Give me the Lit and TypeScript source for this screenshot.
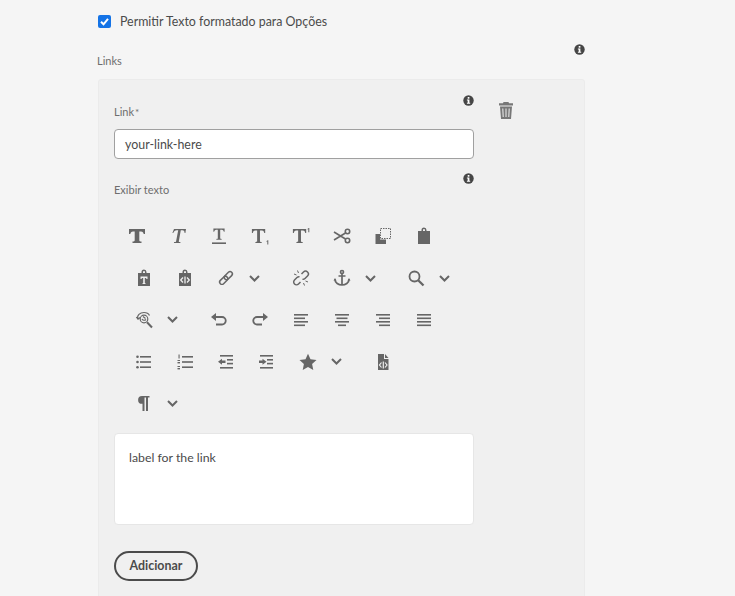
import { LitElement, html, css, svg } from 'lit';
import { customElement } from 'lit/decorators.js';

const T_THIN = 'M2 2h14v4h-1c-.2-1.300-.7-2.600-2.500-2.600h-2v10.800c0 .6.500.8 1.800.8V16H5.700v-1c1.300 0 1.800-.2 1.800-.8V3.400h-2C3.700 3.400 3.200 4.700 3 6H2z';
const T_BOLD = 'M1 2h16v5h-1.300c-.3-1.600-1-2.600-2.700-2.600h-1.700v8.900c0 .9.600 1.200 2.200 1.200V16H4.500v-1.500c1.600 0 2.200-.3 2.200-1.200V4.400H5C3.300 4.400 2.600 5.400 2.300 7H1z';

const lines = (rows: number[][]) =>
  rows.map(([x, y, w]) => svg`<rect x=${x} y=${y} width=${w} height="1.600"></rect>`);

const clip = (inner: unknown) => svg`
  <path d="M3 4h3.500V3a2.500 2.500 0 0 1 5 0v1H15v13H3zM8 4h2V3a1 1 0 0 0-2 0z" fill-rule="evenodd"></path>${inner}`;

const ICONS: Record<string, unknown> = {
  bold: svg`<path d=${T_BOLD}></path>`,
  italic: svg`<path d="M5 2h12l-.6 4h-.8c0-1.700-.5-2.800-2.300-2.800h-1.500L9.800 14.200c-.1.600.4.900 1.700.9l-.2.900H4.900l.2-.9c1.300 0 1.800-.3 2-.9L9.200 3.200H7.700C5.900 3.200 5 4.300 4.200 6h-.8z"></path>`,
  underline: svg`<g transform="translate(1.800 0) scale(.8)"><path d=${T_THIN}></path></g><rect x="2" y="15.400" width="14" height="1.600"></rect>`,
  sub: svg`<g transform="translate(-1 0) scale(.95 1)"><path d=${T_THIN}></path></g><path d="M15.600 14l1.200-.8h.5V17.500h-1v-3l-.7.400z"></path>`,
  sup: svg`<g transform="translate(-1 0) scale(.95 1)"><path d=${T_THIN}></path></g><path d="M15.600 1.800l1.200-.8h.5V5.300h-1v-3l-.7.400z"></path>`,
  cut: svg`<g fill="none" stroke-width="1.600"><circle cx="14.500" cy="4.500" r="2.200"></circle><circle cx="14.500" cy="13.500" r="2.200"></circle><path d="M1 5l11.500 7M1 13l11.500-7"></path></g>`,
  copy: svg`<path d="M1.500 7H6v5.500h6V17H1.500z"></path><rect x="6.500" y="1.500" width="10" height="10" fill="none" stroke-width="1" stroke-dasharray="1.500 1"></rect>`,
  paste: clip(''),
  pasteText: clip(svg`<path fill="#f0f0f0" d="M5.500 7.500h7V10h-1c-.2-.8-.5-1-1.200-1H9.800v4.800c0 .3.2.4.700.4v.8h-3v-.8c.5 0 .7-.1.7-.4V9H7.700c-.7 0-1 .2-1.200 1h-1z"></path>`),
  pasteHtml: clip(svg`<g fill="none" stroke="#f0f0f0" stroke-width="1.300"><path d="M7 8.500L4.700 11 7 13.500M11 8.500l2.300 2.500-2.300 2.500M9 7.500v7"></path></g>`),
  link: svg`<g transform="rotate(-45 9 9)" fill="none" stroke-width="1.500"><rect x="1" y="6.700" width="9.500" height="4.600" rx="2.300"></rect><rect x="7.500" y="6.700" width="9.500" height="4.600" rx="2.300"></rect></g>`,
  unlink: svg`<g fill="none" stroke-width="1.500"><path d="M9.500 5l2-2a2.800 2.800 0 0 1 4 4l-2.500 2.500a2.800 2.800 0 0 1-2.500.8M8.500 13l-2 2a2.800 2.800 0 0 1-4-4L5 8.500a2.800 2.800 0 0 1 2.500-.8"></path></g><g fill="none" stroke-width="1"><path d="M5.500 1.500l1 2.500M2 5l2.500 1M12.500 16.500l-1-2.500M16 13l-2.500-1"></path></g>`,
  anchor: svg`<g fill="none" stroke-width="1.700"><circle cx="9" cy="3" r="1.500"></circle><path d="M9 4.500V16M5.500 7h7M2 10.500c0 3.500 3.500 5.500 7 5.500s7-2 7-5.500"></path></g><path d="M.5 11.500L2 9l1.500 2.500zM14.500 11.500L16 9l1.500 2.500z"></path>`,
  search: svg`<g fill="none"><circle cx="7.500" cy="7.500" r="5" stroke-width="1.800"></circle><path d="M11.200 11.200l5.300 5.300" stroke-width="2.300"></path></g>`,
  replace: svg`<g fill="none" stroke-width="1.200"><circle cx="9" cy="8" r="3.800"></circle><path d="M12 11.200l5 5.300" stroke-width="2"></path><path d="M3 8C1.500 4.500 5 1.500 9 1.500c2.500 0 4.500 1 5.500 3M1.300 6L3 8.200 5.200 6.500M7 8c.5 1.300 2.500 1.800 4 .5M8 5.500l2.500 2"></path></g>`,
  undo: svg`<g fill="none" stroke-width="1.800"><path d="M5 6h7a3.700 3.700 0 0 1 0 7.500H6"></path></g><path d="M6 2v8L1 6z"></path>`,
  redo: svg`<g fill="none" stroke-width="1.800"><path d="M13 6H6a3.700 3.700 0 0 0 0 7.500h5"></path></g><path d="M12 2v8l5-4z"></path>`,
  alignLeft: lines([[2, 3, 14], [2, 6.500, 11], [2, 10, 14], [2, 13.500, 11]]),
  alignCenter: lines([[2, 3, 14], [3.500, 6.500, 11], [2, 10, 14], [5, 13.500, 8]]),
  alignRight: lines([[2, 3, 14], [5, 6.500, 11], [2, 10, 14], [5, 13.500, 11]]),
  justify: lines([[2, 3, 14], [2, 6.500, 14], [2, 10, 14], [2, 13.500, 14]]),
  ul: svg`${lines([[5, 3, 11], [5, 8.200, 11], [5, 13.400, 11]])}<circle cx="2.500" cy="3.800" r="1.300"></circle><circle cx="2.500" cy="9" r="1.300"></circle><circle cx="2.500" cy="14.200" r="1.300"></circle>`,
  ol: svg`${lines([[6, 3, 11], [6, 8.200, 11], [6, 13.400, 11]])}<rect x="2.500" y="1.500" width="1.100" height="4"></rect><rect x="1.500" y="7" width="2.500" height="1"></rect><rect x="1.500" y="9" width="2.500" height="1.400"></rect><rect x="1.500" y="13" width="2.500" height="1"></rect><rect x="1.500" y="15" width="2.500" height="1.400"></rect>`,
  outdent: svg`${lines([[3, 2, 13], [10, 6, 6], [10, 9.800, 6], [3, 14, 13]])}<path d="M1 8.800L5 5.800v1.800h3.500v2.400H5v1.800z"></path>`,
  indent: svg`${lines([[2, 2, 13], [9, 6, 6], [9, 9.800, 6], [2, 14, 13]])}<path d="M8.500 8.800L4.500 5.800v1.800H1v2.400h3.500v1.800z"></path>`,
  star: svg`<path d="M9 .8l2.500 5.500 6 .7-4.400 4 1.200 6L9 14l-5.300 3 1.200-6L.5 7l6-.7z"></path>`,
  fileCode: svg`<path d="M4 1h6v5h4.500v11H4zM11 1l3.500 4H11z"></path><g fill="none" stroke="#f0f0f0" stroke-width="1.200"><path d="M7.500 9.500L5.500 12l2 2.500M11 9.500l2 2.500-2 2.500M9.300 8.500v7"></path></g>`,
  pilcrow: svg`<path d="M7 2H14.500v1.600H13V17h-2V3.600H9.500V17h-2v-7.200H7a3.900 3.900 0 0 1 0-7.800z"></path>`,
};

const ROWS: Array<Array<[string, boolean?]>> = [
  [['bold'], ['italic'], ['underline'], ['sub'], ['sup'], ['cut'], ['copy'], ['paste']],
  [['pasteText'], ['pasteHtml'], ['link', true], ['unlink'], ['anchor', true], ['search', true]],
  [['replace', true], ['undo'], ['redo'], ['alignLeft'], ['alignCenter'], ['alignRight'], ['justify']],
  [['ul'], ['ol'], ['outdent'], ['indent'], ['star', true], ['fileCode']],
  [['pilcrow', true]],
];

const info = html`<svg class="info" viewBox="0 0 11 11" aria-hidden="true">
  <circle cx="5.500" cy="5.500" r="5.200" fill="#464646"></circle>
  <rect x="4.700" y="2" width="1.700" height="1.700" fill="#fff"></rect>
  <path d="M3.900 4.500h2.500v3.300h.8v1H3.900v-1h.8V5.500h-.8z" fill="#fff"></path>
</svg>`;

@customElement('app-root')
export class AppRoot extends LitElement {
  static styles = css`
    :host {
      display: block;
      height: 596px;
      overflow: hidden;
      background: #f5f5f5;
      font-family: 'Lato', 'Open Sans', sans-serif;
      color: #6e6e6e;
    }

    .page {
      width: 487px;
      margin-left: 98px;
      padding-top: 14px;
    }

    .check {
      display: flex;
      align-items: center;
      gap: 9px;
      height: 14px;
      font-size: 12.4px;
      color: #4b4b4b;
    }

    .box {
      width: 13px;
      height: 13px;
      border-radius: 2px;
      background: #1473e6;
      display: flex;
    }

    .box svg {
      width: 13px;
      height: 13px;
    }

    .head {
      display: flex;
      justify-content: space-between;
      align-items: flex-start;
      font-size: 11px;
      line-height: 16px;
    }

    .head label {
      padding-top: 9px;
    }

    .links-head label {
      margin-left: -1px;
    }

    .star {
      margin-left: 1px;
      font-size: 10px;
      line-height: 0;
    }

    .info {
      width: 11px;
      height: 11px;
      flex: none;
    }

    .links-head {
      margin: 16px 0 10px;
    }

    .panel {
      display: flex;
      background: #f0f0f0;
      border: 1px solid #ebebeb;
      border-radius: 3px;
      padding: 15px 15px 20px;
    }

    .fields {
      width: 360px;
    }

    .link-head {
      margin-bottom: 9px;
    }

    .text-head {
      margin-top: 14px;
    }

    .input {
      box-sizing: border-box;
      height: 30px;
      padding: 0 10px;
      display: flex;
      align-items: center;
      background: #fff;
      border: 1px solid #a0a0a0;
      border-radius: 4px;
      font-size: 12.4px;
      color: #4b4b4b;
    }

    .toolbar {
      margin-top: 17.500px;
    }

    .row {
      display: flex;
      height: 41.750px;
      align-items: center;
      padding-left: 9.500px;
    }

    .row.first {
      padding-left: 2.500px;
    }

    .btn {
      width: 41px;
      display: flex;
      justify-content: center;
      flex: none;
    }

    .btn svg {
      width: 18px;
      height: 18px;
      fill: #666;
      stroke: #666;
      stroke-width: 0;
    }

    .btn svg g[fill='none'],
    .btn svg g[fill='none'] * {
      stroke: #666;
    }

    .btn svg g[stroke='#f0f0f0'],
    .btn svg g[stroke='#f0f0f0'] * {
      stroke: #f0f0f0;
    }

    .btn svg rect[fill='none'] {
      stroke: #666;
    }

    .caret {
      width: 33.500px;
      flex: none;
      display: flex;
      padding-left: 2.500px;
      box-sizing: border-box;
    }

    .caret svg {
      width: 11px;
      height: 7px;
      fill: none;
      stroke: #666;
      stroke-width: 2;
    }

    .area {
      box-sizing: border-box;
      height: 92px;
      margin-top: 8.500px;
      padding: 15px 14px;
      background: #fff;
      border: 1px solid #e6e6e6;
      border-radius: 4px;
      font-size: 12.300px;
      line-height: 18px;
      color: #4b4b4b;
    }

    .add {
      box-sizing: border-box;
      display: block;
      width: 84px;
      height: 30px;
      margin-top: 26px;
      padding: 0;
      background: transparent;
      border: 2px solid #4b4b4b;
      border-radius: 15px;
      font: 700 12.400px 'Lato', 'Open Sans', sans-serif;
      color: #4b4b4b;
    }

    .trash {
      width: 14px;
      height: 17px;
      margin: 7px 0 0 25px;
      fill: #777;
    }
  `;

  renderRow(row: Array<[string, boolean?]>, i: number) {
    return html`<div class="row ${i === 0 ? 'first' : ''}">
      ${row.map(
        ([name, drop]) => html`
          <span class="btn"><svg viewBox="0 0 18 18">${ICONS[name]}</svg></span>
          ${drop
            ? html`<span class="caret"><svg viewBox="0 0 11 7"><path d="M1 1l4.500 4.500L10 1"></path></svg></span>`
            : ''}
        `
      )}
    </div>`;
  }

  render() {
    return html`
      <div class="page">
        <div class="check">
          <span class="box">
            <svg viewBox="0 0 13 13"><path d="M3 6.800l2.500 2.500L10 3.800" fill="none" stroke="#fff" stroke-width="2"></path></svg>
          </span>
          Permitir Texto formatado para Opções
        </div>

        <div class="head links-head"><label>Links</label>${info}</div>

        <div class="panel">
          <div class="fields">
            <div class="head link-head"><label>Link<span class="star">*</span></label>${info}</div>
            <div class="input">your-link-here</div>

            <div class="head text-head"><label>Exibir texto</label>${info}</div>
            <div class="toolbar">${ROWS.map((r, i) => this.renderRow(r, i))}</div>
            <div class="area">label for the link</div>
            <button class="add">Adicionar</button>
          </div>

          <svg class="trash" viewBox="0 0 14 17">
            <path d="M4.500 0h5l.5 1.300h4V3.500H0V1.300h4z"></path>
            <path d="M1 4.500h12L12 17H2zM3.300 6.500l.4 8.500h1L4.300 6.500zM6.500 6.500V15h1V6.500zM9.700 6.500L9.300 15h1l.4-8.500z" fill-rule="evenodd"></path>
          </svg>
        </div>
      </div>
    `;
  }
}
